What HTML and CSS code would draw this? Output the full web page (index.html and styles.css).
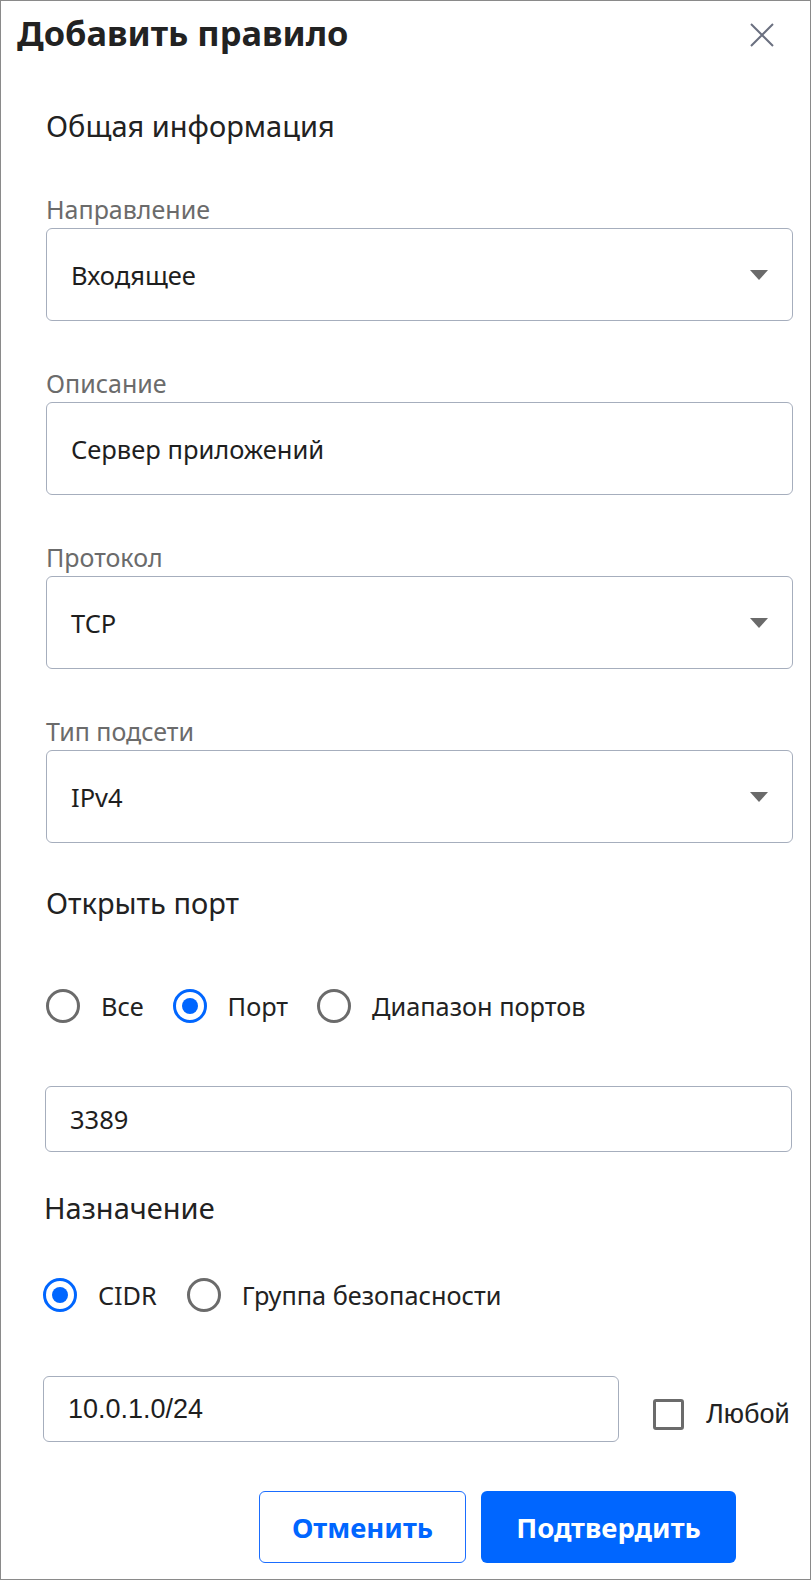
FILE: index.html
```html
<!DOCTYPE html>
<html lang="ru">
<head>
<meta charset="utf-8">
<title>Добавить правило</title>
<link rel="stylesheet" href="styles.css">
</head>
<body>
<div class="dialog">
  <div class="header">
    <h1 class="title">Добавить правило</h1>
    <button class="close" aria-label="Закрыть">
      <svg width="24" height="24" viewBox="0 0 24 24"><path d="M1 1 L23 23 M23 1 L1 23" stroke="#6b7080" stroke-width="2" fill="none"/></svg>
    </button>
  </div>
  <div class="body">
    <h2 class="section first">Общая информация</h2>

    <div class="field">
      <div class="label">Направление</div>
      <div class="box select"><span>Входящее</span><span class="caret"></span></div>
    </div>
    <div class="field">
      <div class="label">Описание</div>
      <div class="box"><span>Сервер приложений</span></div>
    </div>
    <div class="field">
      <div class="label">Протокол</div>
      <div class="box select"><span>TCP</span><span class="caret"></span></div>
    </div>
    <div class="field">
      <div class="label">Тип подсети</div>
      <div class="box select"><span>IPv4</span><span class="caret"></span></div>
    </div>

    <h2 class="section port-title">Открыть порт</h2>
    <div class="radios port-radios">
      <label class="radio"><span class="dot"></span>Все</label>
      <label class="radio"><span class="dot on"></span>Порт</label>
      <label class="radio"><span class="dot"></span>Диапазон портов</label>
    </div>
    <div class="box small port-input"><span>3389</span></div>

    <h2 class="section dest-title">Назначение</h2>
    <div class="radios dest-radios">
      <label class="radio"><span class="dot on"></span>CIDR</label>
      <label class="radio"><span class="dot"></span>Группа безопасности</label>
    </div>
    <div class="cidr-row">
      <div class="box small cidr-input"><span class="arial">10.0.1.0/24</span></div>
      <label class="check"><span class="square"></span><span class="arial">Любой</span></label>
    </div>

    <div class="actions">
      <button class="btn cancel">Отменить</button>
      <button class="btn confirm">Подтвердить</button>
    </div>
  </div>
</div>
</body>
</html>
```

FILE: styles.css
```css
* { box-sizing: border-box; }
html, body { margin: 0; padding: 0; background: #fff; }
body { font-family: "Noto Sans", "Open Sans", sans-serif; color: #222; }

.dialog {
  width: 811px;
  height: 1580px;
  border: 1px solid #8a8a8a;
  background: #fff;
  overflow: hidden;
}

.header {
  display: flex;
  justify-content: space-between;
  align-items: flex-start;
  padding: 12px 36px 0 16px;
}
.title {
  margin: 0;
  font-size: 34.4px;
  line-height: 40px;
  font-weight: 700;
  color: #222;
}
.close {
  margin-top: 10px;
  width: 24px;
  height: 24px;
  padding: 0;
  border: 0;
  background: none;
  display: block;
}
.close svg { display: block; }

.body {
  padding: 0 17px 0 45px;
}

.section {
  margin: 0;
  font-size: 29px;
  line-height: 36px;
  font-weight: 400;
  color: #222;
}
.section.first { margin-top: 55px; margin-bottom: 49px; }

.field + .field { margin-top: 46px; }
.label {
  font-size: 25px;
  line-height: 32px;
  color: #6b6b6b;
  margin-bottom: 3px;
}
.box {
  height: 93px;
  border: 1px solid #a6aebd;
  border-radius: 6px;
  display: flex;
  align-items: center;
  justify-content: space-between;
  padding: 0 24px;
  font-size: 25.5px;
  color: #1e1e1e;
}
.box.small { height: 66px; }
.caret {
  width: 0;
  height: 0;
  border-left: 9px solid transparent;
  border-right: 9px solid transparent;
  border-top: 10px solid #6a6a6a;
}

.port-title { margin-top: 42px; }
.radios {
  display: flex;
  align-items: center;
  gap: 29px;
  height: 34px;
}
.port-radios { margin-top: 68px; }
.radio {
  display: flex;
  align-items: center;
  gap: 21px;
  font-size: 25.3px;
  line-height: 34px;
  color: #222;
}
.dot {
  width: 34px;
  height: 34px;
  border-radius: 50%;
  border: 3px solid #6b6b6b;
  display: flex;
  align-items: center;
  justify-content: center;
  flex: none;
}
.dot.on { border-color: #0066ff; }
.dot.on::after {
  content: "";
  width: 16px;
  height: 16px;
  border-radius: 50%;
  background: #0066ff;
}

.port-input { margin-top: 63px; margin-left: -1px; margin-right: 1px; }

.dest-title { margin-top: 38px; margin-left: -2px; }
.dest-radios { margin-top: 52px; margin-left: -3px; }
.dest-radios .radio:last-child { margin-left: 1px; }

.cidr-row {
  display: flex;
  align-items: center;
  margin-top: 64px;
  margin-left: -3px;
}
.cidr-input { width: 576px; height: 68px; justify-content: flex-start; }
.arial { font-family: "Liberation Sans", Arial, sans-serif; font-size: 27px; }
.check {
  display: flex;
  align-items: center;
  gap: 22px;
  margin-left: 34px;
  margin-top: 10px;
  color: #222;
}
.square {
  width: 31px;
  height: 31px;
  border: 3px solid #6b6b6b;
  border-radius: 3px;
  flex: none;
}

.actions {
  display: flex;
  justify-content: flex-end;
  gap: 15px;
  margin-top: 49px;
  margin-right: 57px;
}
.btn {
  height: 72px;
  border-radius: 6px;
  font-family: "Noto Sans", sans-serif;
  font-size: 27.5px;
  font-weight: 700;
  padding: 0;
  cursor: pointer;
}
.cancel {
  width: 207px;
  background: #fff;
  border: 1px solid #1a6dff;
  color: #0066ff;
}
.confirm {
  width: 255px;
  background: #0066ff;
  border: 0;
  color: #fff;
}
```
